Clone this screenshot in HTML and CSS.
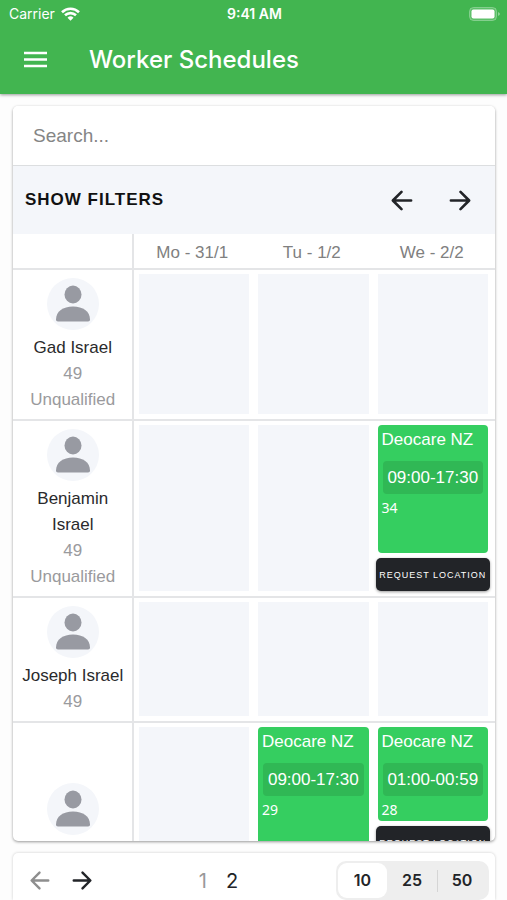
FILE: index.html
```html
<!DOCTYPE html>
<html lang="en">
<head>
<meta charset="utf-8">
<meta name="viewport" content="width=device-width, initial-scale=1">
<title>Worker Schedules</title>
<link rel="stylesheet" href="styles.css">
</head>
<body>
<svg class="defs" aria-hidden="true">
  <symbol id="back" viewBox="0 0 24 24"><path d="M12 3 3 12l9 9M3.500 12H22" fill="none" stroke="currentColor" stroke-width="2.800" stroke-linecap="round" stroke-linejoin="round"/></symbol>
  <symbol id="forward" viewBox="0 0 24 24"><path d="m12 3 9 9-9 9M20.500 12H2" fill="none" stroke="currentColor" stroke-width="2.800" stroke-linecap="round" stroke-linejoin="round"/></symbol>
  <symbol id="person" viewBox="0 0 52 52"><ellipse cx="26" cy="16.500" rx="8.500" ry="9"/><path d="M9 41.500C9 33.500 16 28.500 26 28.500s17 5 17 13c0 1.300-.7 2-2 2H11c-1.300 0-2-.7-2-2z"/></symbol>
</svg>
<header class="header">
  <div class="status">
    <div class="carrier">Carrier
      <svg width="19" height="14" viewBox="0 0 19 14" fill="none" stroke="#fff" stroke-width="2.600" aria-hidden="true"><path d="M1 5.200a12.200 12.200 0 0 1 17 0M4 8.300a8 8 0 0 1 11 0"/><path d="m9.500 13.800-3-3a4.300 4.300 0 0 1 6 0z" fill="#fff" stroke="none"/></svg>
    </div>
    <div class="clock">9:41 AM</div>
    <svg class="battery" width="31" height="14" viewBox="0 0 31 14" aria-hidden="true"><rect x=".5" y=".5" width="27" height="13" rx="4" fill="#fff" fill-opacity=".15" stroke="#fff" stroke-opacity=".3"/><rect x="2.500" y="2.500" width="23" height="9" rx="2" fill="#fff"/><path d="M29 5v4q2-1 2-2t-2-2z" fill="#fff" fill-opacity=".4"/></svg>
  </div>
  <div class="toolbar">
    <button class="icon-button menu" type="button" aria-label="Menu"><svg width="23" height="17" viewBox="0 0 23 17" aria-hidden="true"><path d="M0 2h23M0 8.500h23M0 15h23" stroke="#fff" stroke-width="2.400"/></svg></button>
    <h1>Worker Schedules</h1>
  </div>
</header>
<main class="content">
  <section class="card">
    <input class="search" type="search" placeholder="Search..." aria-label="Search">
    <div class="filters">
      <button class="filter-button" type="button">SHOW FILTERS</button>
      <div class="week">
        <button class="icon-button" type="button" aria-label="Previous days"><svg width="23" height="23"><use href="#back"/></svg></button>
        <button class="icon-button" type="button" aria-label="Next days"><svg width="23" height="23"><use href="#forward"/></svg></button>
      </div>
    </div>
    <table class="schedule">
      <thead>
        <tr><th class="worker-column" aria-label="Worker"></th><th>Mo - 31/1</th><th>Tu - 1/2</th><th class="last-column">We - 2/2</th></tr>
      </thead>
      <tbody>
        <tr>
          <th><svg class="avatar"><use href="#person"/></svg><div class="name">Gad Israel</div><div>49</div><div>Unqualified</div></th>
          <td></td><td></td><td></td>
        </tr>
        <tr>
          <th><svg class="avatar"><use href="#person"/></svg><div class="name">Benjamin Israel</div><div>49</div><div>Unqualified</div></th>
          <td></td><td></td>
          <td class="booked"><div class="shift long"><div>Deocare NZ</div><div class="time">09:00-17:30</div><div class="number">34</div></div><button class="locate" type="button">REQUEST LOCATION</button></td>
        </tr>
        <tr>
          <th><svg class="avatar"><use href="#person"/></svg><div class="name">Joseph Israel</div><div>49</div></th>
          <td></td><td></td><td></td>
        </tr>
        <tr class="last">
          <th><svg class="avatar"><use href="#person"/></svg></th>
          <td></td>
          <td class="booked"><div class="shift long"><div>Deocare NZ</div><div class="time">09:00-17:30</div><div class="number">29</div></div></td>
          <td class="booked"><div class="shift"><div>Deocare NZ</div><div class="time">01:00-00:59</div><div class="number">28</div></div><button class="locate" type="button">REQUEST LOCATION</button></td>
        </tr>
      </tbody>
    </table>
  </section>
  <footer class="pager">
    <div class="steps">
      <button class="icon-button" type="button" aria-label="Previous page" disabled><svg width="21" height="21"><use href="#back"/></svg></button>
      <button class="icon-button" type="button" aria-label="Next page"><svg width="21" height="21"><use href="#forward"/></svg></button>
    </div>
    <nav class="pages" aria-label="Pages"><a href="#1" class="current" aria-current="page">1</a><a href="#2">2</a></nav>
    <div class="sizes" role="radiogroup" aria-label="Rows per page">
      <label><input type="radio" name="size" checked><span>10</span></label>
      <label><input type="radio" name="size"><span>25</span></label>
      <label class="divided"><input type="radio" name="size"><span>50</span></label>
    </div>
  </footer>
</main>
</body>
</html>
```
FILE: styles.css
```css
* { box-sizing: border-box; }

body {
  margin: 0;
  height: 100vh;
  overflow: hidden;
  display: flex;
  flex-direction: column;
  background: #fdfdfd;
  color: #222428;
  font-family: "Liberation Sans", sans-serif;
  font-size: 17px;
}

button, input { font: inherit; color: inherit; }
button { border: 0; background: none; padding: 0; }
svg { display: block; }
.defs { position: absolute; width: 0; height: 0; }

.header {
  flex: none;
  background: #42b550;
  color: #fff;
  box-shadow: 0 1px 3px rgba(0, 0, 0, 0.4);
}

.status {
  display: grid;
  grid-template-columns: 1fr auto 1fr;
  align-items: center;
  height: 27px;
  padding: 0 7px 0 9px;
  font-family: Inter, sans-serif;
  font-size: 14px;
}
.carrier { display: flex; align-items: center; gap: 6px; }
.clock { font-weight: 600; }
.battery { justify-self: end; }

.toolbar { display: flex; align-items: center; height: 67px; padding: 0 24px 2px; }
.menu { margin-right: 42px; }
h1 { margin: 0; font-family: Inter, sans-serif; font-size: 24px; font-weight: 500; }

.content {
  flex: 1;
  min-height: 0;
  display: flex;
  flex-direction: column;
  gap: 12px;
  padding: 12px 12px 0 13px;
}

.card {
  flex: 1;
  min-height: 0;
  overflow: hidden;
  border-radius: 5px;
  background: #fff;
  box-shadow: 0 1px 3px rgba(0, 0, 0, 0.4);
}

.search {
  display: block;
  width: 100%;
  height: 60px;
  padding: 0 20px;
  border: 0;
  border-bottom: 1px solid #dcdee0;
  background: #fff;
  font-size: 19px;
  appearance: none;
}
.search::placeholder { color: #858585; opacity: 1; }

.filters {
  display: flex;
  align-items: center;
  justify-content: space-between;
  height: 68px;
  padding: 0 23px 0 12px;
  background: #f4f6fa;
}
.filter-button { font-size: 17px; font-weight: 600; letter-spacing: 1px; color: #111; }
.week { display: flex; gap: 36px; }

.schedule { width: 100%; border-collapse: separate; border-spacing: 0; table-layout: fixed; }
.schedule th { font-weight: 400; padding: 0; }
.schedule thead th { height: 36px; color: #808080; border-bottom: 2px solid #e4e5e7; padding: 3px 2px 0 0; }
.schedule .worker-column { width: 25%; }
.schedule thead .last-column { width: 25.4%; padding-right: 4px; }
.schedule th:first-child { border-right: 2px solid #e4e5e7; }
.schedule tbody th {
  padding: 8px 4px 6px 5px;
  border-bottom: 2px solid #e4e5e7;
  color: #9a9a9d;
  line-height: 26px;
  vertical-align: middle;
}
.schedule td {
  padding: 4px 4px 5px 5px;
  border-bottom: 2px solid #e4e5e7;
  background: #f4f6fa;
  background-clip: content-box;
  vertical-align: top;
}
.schedule td:last-child { padding-right: 7px; }
.schedule .booked { background: none; }
.schedule .last { height: 177px; }
.schedule .name { color: #2a2a2c; }

.avatar {
  width: 52px;
  height: 52px;
  margin: 0 auto 5px;
  border-radius: 50%;
  background: #f4f6fa;
  fill: #989aa2;
}

.shift {
  min-height: 94px;
  padding: 2px 4px;
  border-radius: 4px;
  background: #35ce60;
  color: #fff;
  line-height: 26px;
}
.long { min-height: 128px; }
.time {
  margin: 8px 1px 4px;
  border-radius: 4px;
  background: #30b855;
  text-align: center;
  line-height: 33px;
}
.number { font-family: "Noto Sans", sans-serif; font-size: 14px; line-height: 19px; }

.locate {
  display: block;
  width: calc(100% + 4px);
  height: 33px;
  margin: 5px -2px 0;
  border-radius: 5px;
  background: #222428;
  color: #fff;
  font-size: 9px;
  letter-spacing: 1px;
  white-space: nowrap;
  box-shadow: 0 1px 3px rgba(0, 0, 0, 0.4);
}

.pager {
  flex: none;
  display: flex;
  justify-content: space-between;
  align-items: center;
  padding: 8px 6px 0 16px;
  border-radius: 5px 5px 0 0;
  background: #fff;
  box-shadow: 0 0 3px rgba(0, 0, 0, 0.2);
}
.steps { display: flex; gap: 22px; padding-right: 8px; }
.steps button:disabled { color: #8e8e8e; }
.pages { display: flex; gap: 19px; font-family: Inter, sans-serif; font-size: 20px; }
.pages a { color: inherit; text-decoration: none; }
.pages .current { color: #999; }

.sizes {
  display: flex;
  padding: 2px;
  border-radius: 10px;
  background: #eee;
  font-family: Inter, sans-serif;
  font-size: 16px;
  font-weight: 600;
}
.sizes label { position: relative; }
.sizes input { position: absolute; opacity: 0; margin: 0; }
.sizes span { display: block; width: 49px; line-height: 35px; border-radius: 9px; text-align: center; }
.sizes label:nth-child(2) span, .sizes label:nth-child(3) span { width: 50px; }
.sizes input:checked + span { background: #fff; }
.divided { background: linear-gradient(#d5d5d5, #d5d5d5) left center / 1px 22px no-repeat; }
```
